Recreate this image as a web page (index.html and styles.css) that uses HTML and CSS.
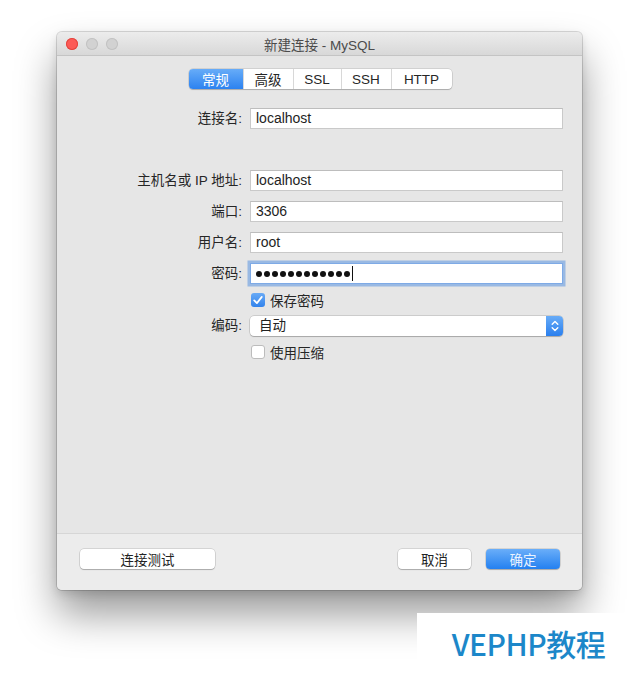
FILE: index.html
```html
<!DOCTYPE html>
<html lang="zh-CN">
<head>
<meta charset="utf-8">
<title>新建连接 - MySQL</title>
<link rel="stylesheet" href="styles.css">
</head>
<body>
<div class="window">
  <div class="titlebar">
    <div class="lights">
      <span class="light red"></span>
      <span class="light"></span>
      <span class="light"></span>
    </div>
    <div class="title">新建连接 - MySQL</div>
    <div></div>
  </div>
  <div class="content">
    <div class="tabs">
      <span class="tab active w54">常规</span>
      <span class="tab w50">高级</span>
      <span class="tab w48">SSL</span>
      <span class="tab w50">SSH</span>
      <span class="tab w61">HTTP</span>
    </div>
    <div class="form">
      <label class="label">连接名:</label>
      <div class="field">localhost</div>

      <div class="spacer"></div>
      <div class="spacer"></div>

      <label class="label">主机名或 IP 地址:</label>
      <div class="field">localhost</div>

      <label class="label">端口:</label>
      <div class="field">3306</div>

      <label class="label">用户名:</label>
      <div class="field">root</div>

      <label class="label">密码:</label>
      <div class="field focused">
        <span class="dots">
          <i></i><i></i><i></i><i></i><i></i><i></i><i></i><i></i><i></i><i></i><i></i><i></i>
        </span>
        <span class="caret"></span>
      </div>

      <div></div>
      <div class="check-row">
        <span class="checkbox checked">
          <svg width="14" height="14" viewBox="0 0 14 14"><path d="M3.2 7.4 L5.9 10.1 L10.8 3.9" fill="none" stroke="#fff" stroke-width="1.7" stroke-linecap="round" stroke-linejoin="round"/></svg>
        </span>
        <span>保存密码</span>
      </div>

      <label class="label sel-label">编码:</label>
      <div class="select">
        <span class="select-text">自动</span>
        <span class="stepper">
          <svg width="10" height="16" viewBox="0 0 10 16"><path d="M2.2 6.3 L5 3.5 L7.8 6.3 M2.2 9.7 L5 12.5 L7.8 9.7" fill="none" stroke="#fff" stroke-width="1.4" stroke-linecap="round" stroke-linejoin="round"/></svg>
        </span>
      </div>

      <div></div>
      <div class="check-row">
        <span class="checkbox"></span>
        <span>使用压缩</span>
      </div>
    </div>
  </div>
  <div class="footer">
    <button class="btn test">连接测试</button>
    <div class="footer-right">
      <button class="btn cancel">取消</button>
      <button class="btn primary">确定</button>
    </div>
  </div>
</div>
<div class="watermark">VEPHP教程</div>
</body>
</html>
```

FILE: styles.css
```css
html, body {
  margin: 0;
  padding: 0;
  background: #ffffff;
}

body {
  width: 640px;
  height: 674px;
  position: relative;
  overflow: hidden;
  font-family: "Liberation Sans", "Noto Sans CJK SC", sans-serif;
  font-size: 13px;
  color: #222;
  padding-top: 32px;
  box-sizing: border-box;
}

.window {
  margin-left: 57px;
  width: 525px;
  height: 558px;
  border-radius: 5px;
  overflow: hidden;
  display: flex;
  flex-direction: column;
  background: #e6e6e6;
  box-shadow: 0 0 0 1px rgba(0, 0, 0, 0.14), 0 24px 40px rgba(0, 0, 0, 0.4), 0 4px 10px rgba(0, 0, 0, 0.12);
}

.titlebar {
  height: 24px;
  flex: none;
  display: grid;
  grid-template-columns: 1fr auto 1fr;
  align-items: center;
  background: linear-gradient(#ececec, #d8d8d8);
  border-bottom: 1px solid #c4c4c4;
  box-sizing: border-box;
}

.lights {
  display: flex;
  gap: 8px;
  padding-left: 9px;
}

.light {
  width: 12px;
  height: 12px;
  border-radius: 50%;
  background: #d2d2d2;
  box-shadow: inset 0 0 0 1px #c2c2c2;
}

.light.red {
  background: #fc5b57;
  box-shadow: inset 0 0 0 1px #e2463f;
}

.title {
  font-size: 13.5px;
  color: #4b4b4b;
}

.content {
  flex: 1;
  padding-top: 13px;
  display: flex;
  flex-direction: column;
}

.tabs {
  align-self: center;
  display: flex;
  height: 20px;
  background: #fff;
  border-radius: 4px;
  box-shadow: 0 0 0 0.5px rgba(0, 0, 0, 0.18), 0 1px 1px rgba(0, 0, 0, 0.18);
  margin-bottom: 19px;
  margin-left: 1px;
}

.tab {
  display: flex;
  align-items: center;
  justify-content: center;
  font-size: 13.5px;
  color: #262626;
  border-left: 1px solid #d8d8d8;
  box-sizing: border-box;
}

.tab:first-child {
  border-left: none;
  border-radius: 4px 0 0 4px;
}

.tab:last-child {
  border-radius: 0 4px 4px 0;
}

.tab.active {
  background: linear-gradient(#67acf8, #2c82f0);
  color: #fff;
}

.w54 { width: 54px; }
.w50 { width: 50px; }
.w48 { width: 48px; }
.w61 { width: 61px; }

.form {
  display: grid;
  grid-template-columns: 185px 313px;
  column-gap: 8px;
  row-gap: 10px;
  grid-auto-rows: auto;
}

.label {
  text-align: right;
  font-size: 13.5px;
  color: #262626;
  align-self: center;
  line-height: 21px;
}

.spacer {
  height: 21px;
}

.field {
  height: 21px;
  box-sizing: border-box;
  background: #fff;
  border: 1px solid #c9c9c9;
  border-top-color: #bdbdbd;
  padding-left: 5px;
  font-size: 14px;
  line-height: 19px;
  color: #1e1e1e;
  display: flex;
  align-items: center;
}

.field.focused {
  border-color: #7eaae6;
  box-shadow: 0 0 0 2.5px rgba(120, 165, 225, 0.7);
}

.dots {
  display: flex;
  gap: 2px;
}

.dots i {
  width: 6px;
  height: 6px;
  border-radius: 50%;
  background: #111;
}

.caret {
  width: 1px;
  height: 15px;
  background: #111;
  margin-left: 2px;
}

.check-row {
  height: 13px;
  margin-top: -1px;
  display: flex;
  align-items: center;
  gap: 5px;
  font-size: 13.5px;
  color: #262626;
  padding-left: 1px;
}

.checkbox {
  width: 14px;
  height: 14px;
  border-radius: 3px;
  box-sizing: border-box;
  background: #fff;
  border: 1px solid #bcbcbc;
  flex: none;
  display: flex;
}

.checkbox.checked {
  border: none;
  background: linear-gradient(#68aaf6, #3283ec);
}

.sel-label {
  line-height: 20px;
}

.select {
  height: 20px;
  display: flex;
  background: #fff;
  border-radius: 4px;
  box-shadow: 0 0 0 0.5px rgba(0, 0, 0, 0.22), 0 1px 1px rgba(0, 0, 0, 0.18);
  overflow: hidden;
}

.select-text {
  flex: 1;
  padding-left: 9px;
  font-size: 13.5px;
  line-height: 20px;
  color: #222;
}

.stepper {
  width: 17px;
  background: linear-gradient(#68acf8, #2a7fee);
  display: flex;
  align-items: center;
  justify-content: center;
}

.footer {
  height: 57px;
  flex: none;
  box-sizing: border-box;
  background: #ececec;
  border-top: 1px solid #d6d6d6;
  display: flex;
  justify-content: space-between;
  align-items: flex-start;
  padding: 15px 22px 0 23px;
}

.footer-right {
  display: flex;
  gap: 15px;
}

.btn {
  height: 20px;
  border: none;
  background: #fff;
  border-radius: 4px;
  box-shadow: 0 0 0 0.5px rgba(0, 0, 0, 0.2), 0 1px 1px rgba(0, 0, 0, 0.2);
  font-family: "Liberation Sans", "Noto Sans CJK SC", sans-serif;
  font-size: 13.5px;
  color: #222;
  padding: 0;
}

.btn.test {
  width: 135px;
}

.btn.cancel {
  width: 73px;
}

.btn.primary {
  width: 74px;
  background: linear-gradient(#6aaef9, #2480f0);
  color: #eaf3ff;
}

.watermark {
  position: absolute;
  left: 417px;
  top: 613px;
  width: 223px;
  height: 61px;
  background: #fff;
  display: flex;
  align-items: center;
  justify-content: center;
  font-family: "Noto Sans CJK SC", "Noto Sans", sans-serif;
  font-weight: 500;
  font-size: 30px;
  color: #1c87c9;
  letter-spacing: -0.5px;
  padding-bottom: 2px;
  box-sizing: border-box;
}
```
